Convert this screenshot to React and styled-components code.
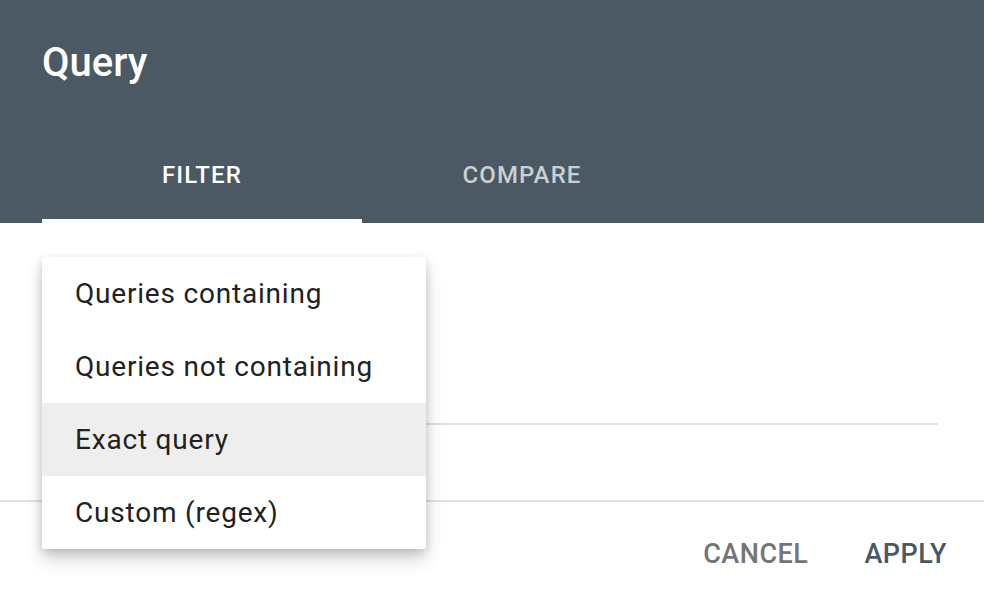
import React from "react";
import styled, { createGlobalStyle } from "styled-components";

const COLORS = {
  header: "#4a5964",
  text: "#222222",
  line: "#e0e0e0",
  hover: "#eeeeee",
  muted: "#757575",
};

const GlobalStyle = createGlobalStyle`
  html, body {
    margin: 0;
    padding: 0;
    background: #ffffff;
    font-family: Roboto, "Liberation Sans", Arial, sans-serif;
    overflow: hidden;
  }
`;

const Dialog = styled.div`
  width: 984px;
  height: 606px;
  display: flex;
  flex-direction: column;
  background: #ffffff;
`;

const Header = styled.header`
  height: 223px;
  background: ${COLORS.header};
  display: flex;
  flex-direction: column;
  padding-left: 42px;
  box-sizing: border-box;
`;

const Title = styled.h1`
  margin: 39px 0 0;
  font-size: 40px;
  line-height: 48px;
  font-weight: 500;
  color: #ffffff;
`;

const Tabs = styled.div`
  margin-top: auto;
  display: flex;
`;

const Tab = styled.div`
  position: relative;
  width: 320px;
  height: 96px;
  display: flex;
  align-items: center;
  justify-content: center;
  font-size: 24px;
  line-height: 24px;
  letter-spacing: 1.1px;
  font-weight: 500;
  color: ${(p) => (p.active ? "#ffffff" : "rgba(255, 255, 255, 0.72)")};

  /* active indicator */
  &::after {
    content: "";
    display: ${(p) => (p.active ? "block" : "none")};
    position: absolute;
    left: 0;
    right: 0;
    bottom: 0;
    height: 4px;
    background: #ffffff;
  }
`;

const Body = styled.div`
  position: relative;
  height: 277px;
  padding: 0 46px 0 42px;
`;

const Field = styled.div`
  height: 200px;
  border-bottom: 2px solid ${COLORS.line};
`;

const Menu = styled.ul`
  position: absolute;
  top: 34px;
  left: 42px;
  width: 384px;
  margin: 0;
  padding: 0;
  list-style: none;
  background: #ffffff;
  border-radius: 2px;
  box-shadow: 0 10px 18px rgba(0, 0, 0, 0.18), 0 3px 8px rgba(0, 0, 0, 0.14);
  z-index: 2;
`;

const MenuItem = styled.li`
  height: 73px;
  display: flex;
  align-items: center;
  padding-left: 33px;
  font-size: 28px;
  letter-spacing: 0.8px;
  color: ${COLORS.text};
  background: ${(p) => (p.highlighted ? COLORS.hover : "transparent")};
`;

const Divider = styled.hr`
  margin: 0;
  border: 0;
  border-top: 2px solid ${COLORS.line};
`;

const Footer = styled.div`
  height: 104px;
  display: flex;
  align-items: center;
  justify-content: flex-end;
  gap: 56px;
  padding-right: 37px;
`;

const Button = styled.button`
  border: 0;
  padding: 0;
  background: none;
  font-family: inherit;
  font-size: 27px;
  letter-spacing: 0.5px;
  font-weight: 500;
  color: ${(p) => (p.primary ? COLORS.header : COLORS.muted)};
  cursor: pointer;
`;

const OPTIONS = [
  "Queries containing",
  "Queries not containing",
  "Exact query",
  "Custom (regex)",
];

export default function App() {
  return (
    <>
      <GlobalStyle />
      <Dialog>
        <Header>
          <Title>Query</Title>
          <Tabs>
            <Tab active>FILTER</Tab>
            <Tab>COMPARE</Tab>
          </Tabs>
        </Header>
        <Body>
          <Field />
          <Menu>
            {OPTIONS.map((opt) => (
              <MenuItem key={opt} highlighted={opt === "Exact query"}>
                {opt}
              </MenuItem>
            ))}
          </Menu>
        </Body>
        <Divider />
        <Footer>
          <Button>CANCEL</Button>
          <Button primary>APPLY</Button>
        </Footer>
      </Dialog>
    </>
  );
}
